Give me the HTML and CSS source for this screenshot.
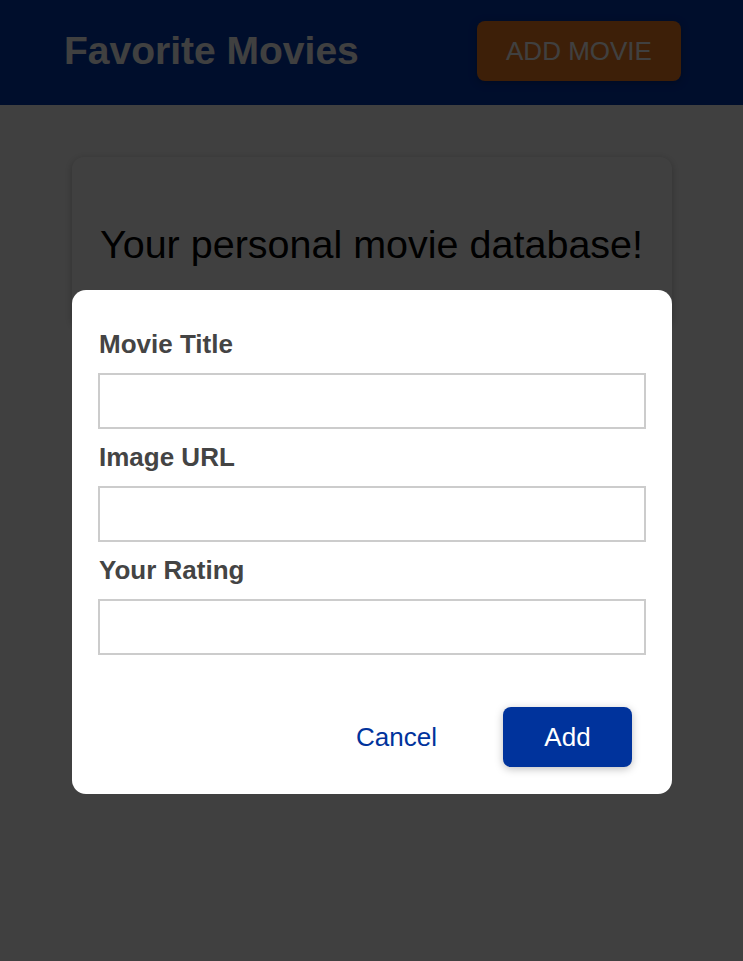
FILE: index.html
```html
<!DOCTYPE html>
<html lang="en">
<head>
<meta charset="utf-8">
<title>Favorite Movies</title>
<link rel="stylesheet" href="styles.css">
</head>
<body>
  <header class="header">
    <h1 class="header__title">Favorite Movies</h1>
    <button class="header__btn">ADD MOVIE</button>
  </header>
  <main class="main">
    <section class="card">
      <h2 class="card__text">Your personal movie database!</h2>
    </section>
  </main>
  <div class="backdrop"></div>
  <div class="modal">
    <form class="form">
      <label class="form__label" for="title">Movie Title</label>
      <input class="form__input" id="title" type="text">
      <label class="form__label" for="image">Image URL</label>
      <input class="form__input" id="image" type="text">
      <label class="form__label" for="rating">Your Rating</label>
      <input class="form__input" id="rating" type="text">
    </form>
    <div class="actions">
      <button class="btn btn--passive" type="button">Cancel</button>
      <button class="btn btn--success" type="button">Add</button>
    </div>
  </div>
</body>
</html>
```
FILE: styles.css
```css
* { box-sizing: border-box; }

html, body {
  margin: 0;
  padding: 0;
}

body {
  font-family: "Liberation Sans", Arial, sans-serif;
  background: #ffffff;
  min-height: 961px;
}

.header {
  height: 105px;
  background: #0038b0;
  display: flex;
  align-items: center;
  justify-content: space-between;
  padding: 0 62px 0 64px;
}

.header__title {
  margin: 0;
  color: #ffffff;
  font-size: 39px;
  font-weight: bold;
  line-height: 46px;
  margin-top: -3px;
}

.header__btn {
  width: 204px;
  height: 60px;
  margin-top: -3px;
  border: none;
  border-radius: 8px;
  background: #f47c20;
  color: #ffffff;
  font-family: inherit;
  font-size: 26px;
  box-shadow: 0 2px 8px rgba(0, 0, 0, 0.26);
}

.main {
  padding-top: 52px;
  display: flex;
  justify-content: center;
}

.card {
  width: 600px;
  background: #ffffff;
  border-radius: 12px;
  box-shadow: 0 2px 8px rgba(0, 0, 0, 0.26);
  padding: 64px 16px 60px;
  text-align: center;
}

.card__text {
  margin: 0;
  font-size: 39.5px;
  font-weight: normal;
  line-height: 46px;
  color: #000000;
}

.backdrop {
  position: fixed;
  inset: 0;
  background: rgba(0, 0, 0, 0.75);
  z-index: 10;
}

.modal {
  position: fixed;
  top: 290px;
  left: 72px;
  width: 600px;
  height: 504px;
  background: #ffffff;
  border-radius: 14px;
  z-index: 20;
  padding: 39px 26px 27px;
  display: flex;
  flex-direction: column;
}

.form {
  display: flex;
  flex-direction: column;
}

.form__label {
  font-size: 26px;
  font-weight: bold;
  line-height: 30px;
  color: #444444;
  padding-left: 1px;
  margin-bottom: 14px;
}

.form__input {
  width: 100%;
  height: 56px;
  border: 2px solid #cccccc;
  border-radius: 0;
  margin: 0 0 13px;
  font: inherit;
  font-size: 26px;
  background: #ffffff;
}

.actions {
  margin-top: auto;
  display: flex;
  justify-content: flex-end;
  gap: 42px;
  padding-right: 14px;
}

.btn {
  width: 129px;
  height: 60px;
  border: none;
  border-radius: 8px;
  font-family: inherit;
  font-size: 26px;
  cursor: pointer;
}

.btn--passive {
  background: transparent;
  color: #00339c;
}

.btn--success {
  background: #00339c;
  color: #ffffff;
  box-shadow: 0 2px 8px rgba(0, 0, 0, 0.26);
}
```
